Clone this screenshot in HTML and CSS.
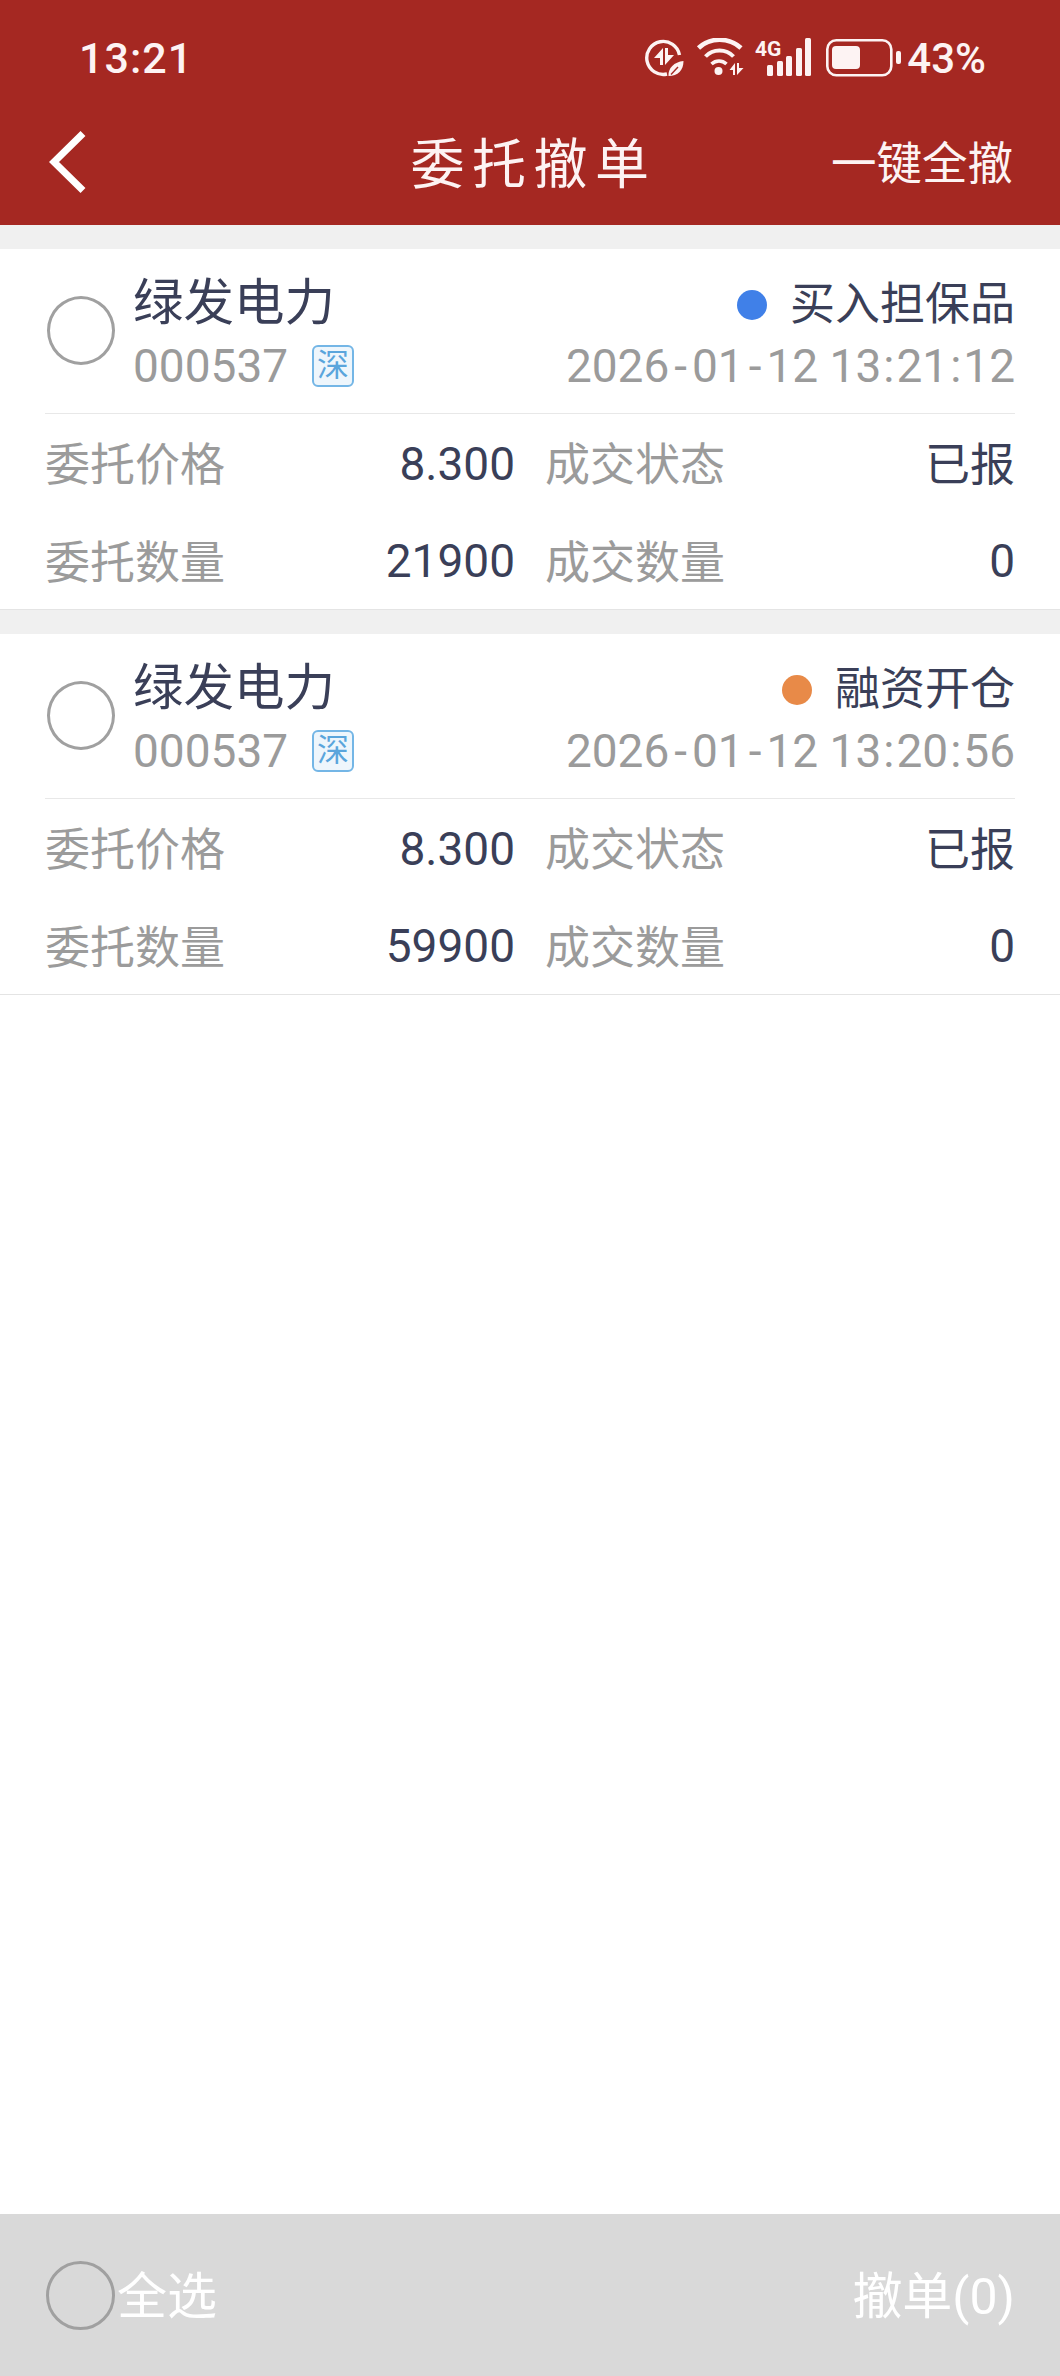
FILE: index.html
```html
<!DOCTYPE html>
<html lang="zh-CN">
<head>
    <meta charset="UTF-8">
    <title>委托撤单</title>
    <link rel="stylesheet" href="styles.css">
</head>
<body>

<header class="top">
    <!-- Status bar -->
    <div class="status-bar">
        <span class="time">13:21</span>
        <div class="status-icons">
            <svg class="icon-saver" width="40" height="40" viewBox="0 0 40 40">
                <path d="M23 36 A16.500 16.500 0 1 1 35.500 17" fill="none" stroke="#fdf3f3" stroke-width="3.400"/>
                <path d="M19 10 L19 27 L16 27 L16 20 L10 20 Z" fill="#fdf3f3"/>
                <path d="M21 10 L24 10 L24 17 L30 17 L21 27 Z" fill="#fdf3f3"/>
                <path d="M39.500 23 C39.500 32 34 38 24.500 38 C24 30 30 24 39.500 23 Z" fill="#fdf3f3"/>
                <path d="M27 36.500 L34 29" stroke="#a52822" stroke-width="1.400"/>
            </svg>
            <svg class="icon-wifi" width="48" height="40" viewBox="0 0 48 40">
                <path d="M2.500 10 C14 -1 33 -1 45 10" fill="none" stroke="#fdf3f3" stroke-width="4.600"/>
                <path d="M9.500 18.500 C17 10.500 30 10.500 37.500 18.500" fill="none" stroke="#fdf3f3" stroke-width="4"/>
                <path d="M15.500 26 C20 22 26 22 30.500 26" fill="none" stroke="#fdf3f3" stroke-width="3.600"/>
                <circle cx="22.500" cy="33" r="4" fill="#fdf3f3"/>
                <path d="M39 25 L39 37 L37 37 L37 32 L33.500 32 Z" fill="#fdf3f3"/>
                <path d="M41 25 L43 25 L43 30 L47.500 30 L41 37 Z" fill="#fdf3f3"/>
            </svg>
            <svg class="icon-signal" width="60" height="40" viewBox="0 0 60 40">
                <text x="2" y="18" class="net-label">4G</text>
                <rect x="14" y="27" width="6" height="11" rx="1.500" fill="#fdf3f3"/>
                <rect x="24" y="23" width="6" height="15" rx="1.500" fill="#fdf3f3"/>
                <rect x="33" y="18" width="6" height="20" rx="1.500" fill="#fdf3f3"/>
                <rect x="43" y="10" width="6" height="28" rx="1.500" fill="#fdf3f3"/>
                <rect x="52" y="0" width="6" height="38" rx="1.500" fill="#fdf3f3"/>
            </svg>
            <svg class="icon-battery" width="78" height="40" viewBox="0 0 78 40">
                <rect x="3.300" y="2.300" width="64" height="35" rx="9" fill="none" stroke="#fdf3f3" stroke-width="2.600"/>
                <rect x="8" y="8" width="28" height="23" rx="4" fill="#fdf3f3"/>
                <rect x="72" y="13" width="5" height="13" rx="2" fill="#fdf3f3"/>
            </svg>
            <span class="battery-text">43%</span>
        </div>
    </div>

    <!-- Nav bar -->
    <nav class="nav-bar">
        <svg class="back" width="40" height="66" viewBox="0 0 40 66">
            <path d="M37 4.500 L8 33 L37 61.500" fill="none" stroke="#fff" stroke-width="7"/>
        </svg>
        <h1>委托撤单</h1>
        <span class="cancel-all">一键全撤</span>
    </nav>
</header>

<main class="list">
    <section class="order">
        <div class="order-head">
            <span class="radio"></span>
            <div class="stock">
                <div class="stock-name">绿发电力</div>
                <div class="stock-code">000537<span class="market">深</span></div>
            </div>
            <div class="order-meta">
                <div class="order-type"><span class="dot dot-blue"></span>买入担保品</div>
                <div class="order-time">2026<span class="dash">-</span>01<span class="dash">-</span>12 13<span class="colon">:</span>21<span class="colon">:</span>12</div>
            </div>
        </div>
        <div class="order-body">
            <div class="cell"><span class="label">委托价格</span><span class="value num">8.300</span></div>
            <div class="cell"><span class="label">成交状态</span><span class="value text">已报</span></div>
            <div class="cell"><span class="label">委托数量</span><span class="value num">21900</span></div>
            <div class="cell"><span class="label">成交数量</span><span class="value num">0</span></div>
        </div>
    </section>

    <section class="order">
        <div class="order-head">
            <span class="radio"></span>
            <div class="stock">
                <div class="stock-name">绿发电力</div>
                <div class="stock-code">000537<span class="market">深</span></div>
            </div>
            <div class="order-meta">
                <div class="order-type"><span class="dot dot-orange"></span>融资开仓</div>
                <div class="order-time">2026<span class="dash">-</span>01<span class="dash">-</span>12 13<span class="colon">:</span>20<span class="colon">:</span>56</div>
            </div>
        </div>
        <div class="order-body">
            <div class="cell"><span class="label">委托价格</span><span class="value num">8.300</span></div>
            <div class="cell"><span class="label">成交状态</span><span class="value text">已报</span></div>
            <div class="cell"><span class="label">委托数量</span><span class="value num">59900</span></div>
            <div class="cell"><span class="label">成交数量</span><span class="value num">0</span></div>
        </div>
    </section>
</main>

<footer class="bottom">
    <div class="select-all">
        <span class="radio"></span>
        <span class="bottom-text">全选</span>
    </div>
    <span class="bottom-text">撤单(0)</span>
</footer>

</body>
</html>
```

FILE: styles.css
```css
* {
    box-sizing: border-box;
}
html, body {
    height: 100%;
}
body {
    margin: 0;
    display: flex;
    flex-direction: column;
    background-color: #fff;
    font-family: Roboto, "Noto Sans CJK SC", sans-serif;
    color: #3a3f58;
}
.top {
    height: 225px;
    background-color: #a52822;
    color: #fdf3f3;
}
.status-bar {
    height: 99px;
    padding: 17px 74px 0 79px;
    display: flex;
    justify-content: space-between;
    align-items: center;
}
.time {
    font-size: 43px;
    font-weight: 500;
    letter-spacing: 1px;
}
.status-icons {
    display: flex;
    align-items: center;
}
.icon-wifi {
    margin-left: 12px;
}
.icon-signal {
    margin-left: 9px;
}
.icon-battery {
    margin-left: 11px;
}
.net-label {
    font-size: 21px;
    font-weight: 700;
    fill: #fdf3f3;
}
.battery-text {
    margin-left: 5px;
    font-size: 42px;
    font-weight: 500;
}
.nav-bar {
    height: 126px;
    padding: 0 47px 0 46px;
    display: grid;
    grid-template-columns: 1fr auto 1fr;
    align-items: center;
}
.nav-bar h1 {
    margin: 0;
    padding: 0 0 3px 8px;
    font-size: 54px;
    font-weight: 400;
    letter-spacing: 7.500px;
}
.cancel-all {
    justify-self: end;
    padding-bottom: 4px;
    font-size: 45.500px;
}
.list {
    flex: 1;
}
.order {
    border-top: 24px solid #f0f0f0;
    border-bottom: 1px solid #e4e4e4;
}
.order-head {
    height: 165px;
    margin: 0 45px;
    display: flex;
    align-items: center;
    border-bottom: 1px solid #e8e8e8;
    padding-bottom: 2px;
}
.radio {
    flex: none;
    width: 68px;
    height: 69px;
    margin-left: 2px;
    border: 3px solid #a0a0a0;
    border-radius: 50%;
}
.stock {
    margin-left: 18px;
    padding-top: 3px;
}
.stock-name {
    font-size: 50.500px;
    line-height: 68px;
}
.stock-code {
    display: flex;
    align-items: center;
    font-size: 46px;
    line-height: 58px;
    color: #9b9b9b;
}
.market {
    width: 42px;
    height: 42px;
    margin-left: 24px;
    border: 2px solid #74b6e6;
    border-radius: 6px;
    background-color: #eef6fc;
    color: #5aa5dc;
    font-size: 32px;
    line-height: 36px;
    text-align: center;
}
.order-meta {
    margin-left: auto;
    padding-top: 4px;
    text-align: right;
}
.order-type {
    display: flex;
    justify-content: flex-end;
    align-items: center;
    padding-top: 3px;
    font-size: 45px;
    line-height: 65px;
}
.dot {
    width: 30px;
    height: 30px;
    margin-right: 23px;
    border-radius: 50%;
}
.dot-blue {
    background-color: #4080e8;
}
.dot-orange {
    background-color: #e88a48;
}
.order-time {
    font-size: 46px;
    line-height: 58px;
    color: #9b9b9b;
}
.dash {
    margin: 0 5px;
}
.colon {
    margin: 0 2px;
}
.order-body {
    margin: 0 45px;
    display: grid;
    grid-template-columns: 1fr 1fr;
    column-gap: 30px;
    grid-auto-rows: 97.500px;
}
.cell {
    display: flex;
    justify-content: space-between;
    align-items: center;
    font-size: 45px;
}
.label {
    padding-bottom: 2px;
    color: #9b9b9b;
}
.text {
    padding-bottom: 2px;
}
.num {
    padding-top: 2px;
    font-size: 46px;
}
.bottom {
    height: 162px;
    padding: 0 45px 0 46px;
    display: flex;
    justify-content: space-between;
    align-items: center;
    background-color: #d9d9d9;
    color: #fff;
    font-size: 50px;
}
.bottom-text {
    padding-bottom: 6px;
}
.select-all {
    display: flex;
    align-items: center;
}
.select-all .radio {
    width: 69px;
    margin: 0 2px 0 0;
}
```
